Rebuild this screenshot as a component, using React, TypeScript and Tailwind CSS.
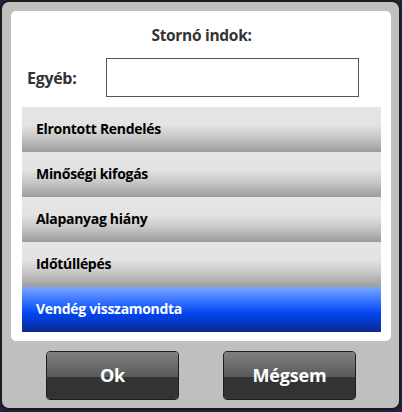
import React from 'react';

const REASONS = ['Elrontott Rendelés', 'Minőségi kifogás', 'Alapanyag hiány', 'Időtúllépés', 'Vendég visszamondta'];

const FONT = "font-['Open_Sans','Noto_Sans',sans-serif]";

function ReasonRow({ label, selected }: { label: string; selected?: boolean }) {
  const bg = selected
    ? 'bg-[linear-gradient(to_bottom,#7aa5ff_0%,#2f6dff_35%,#0044f0_60%,#0a2c8c_100%)] text-white'
    : 'bg-[linear-gradient(to_bottom,#e5e5e5_0%,#e3e3e3_40%,#c4c4c4_70%,#9c9c9c_100%)] text-black';
  return (
    <div className={`h-[45px] flex items-center pl-[14px] pb-[3px] text-[14px] font-bold tracking-[-0.3px] ${bg}`}>
      {label}
    </div>
  );
}

function DarkButton({ label }: { label: string }) {
  return (
    <button
      type="button"
      className="w-[133px] h-[49px] rounded-[4px] border border-[#1e1e1e] overflow-hidden flex flex-col relative"
    >
      <span className="h-[25px] w-full bg-[linear-gradient(to_bottom,#808080,#5a5a5a)]" />
      <span className="flex-1 w-full bg-[#333333]" />
      <span className="absolute inset-0 flex items-center justify-center text-white text-[18px] font-bold tracking-[-0.2px]">
        {label}
      </span>
    </button>
  );
}

export default function App() {
  return (
    <div className={`w-[402px] h-[412px] bg-[#1a2540] ${FONT}`}>
      <div className="w-[401px] h-[410px] rounded-[9px] border-2 border-[#1c1c1c] bg-[#bfbfbf] pt-[9px] pl-[9px]">
        <div className="w-[380px] h-[330px] bg-white rounded-[5px] px-[11px] pr-[10px]">
          <div className="pt-[13px] h-[47px] text-center text-[15.5px] leading-[22px] font-bold text-[#333] tracking-[-0.3px]">
            Stornó indok:
          </div>
          <div className="flex items-center h-[39px]">
            <span className="pl-[5px] w-[84px] text-[16px] font-bold text-[#333] tracking-[-0.3px]">Egyéb:</span>
            <div className="w-[253px] h-[39px] border border-[#555] bg-white" />
          </div>
          <div className="mt-[10px] flex flex-col">
            {REASONS.map((r, i) => (
              <ReasonRow key={r} label={r} selected={i === REASONS.length - 1} />
            ))}
          </div>
        </div>
        <div className="flex gap-[44px] pl-[35px] mt-[10px]">
          <DarkButton label="Ok" />
          <DarkButton label="Mégsem" />
        </div>
      </div>
    </div>
  );
}
